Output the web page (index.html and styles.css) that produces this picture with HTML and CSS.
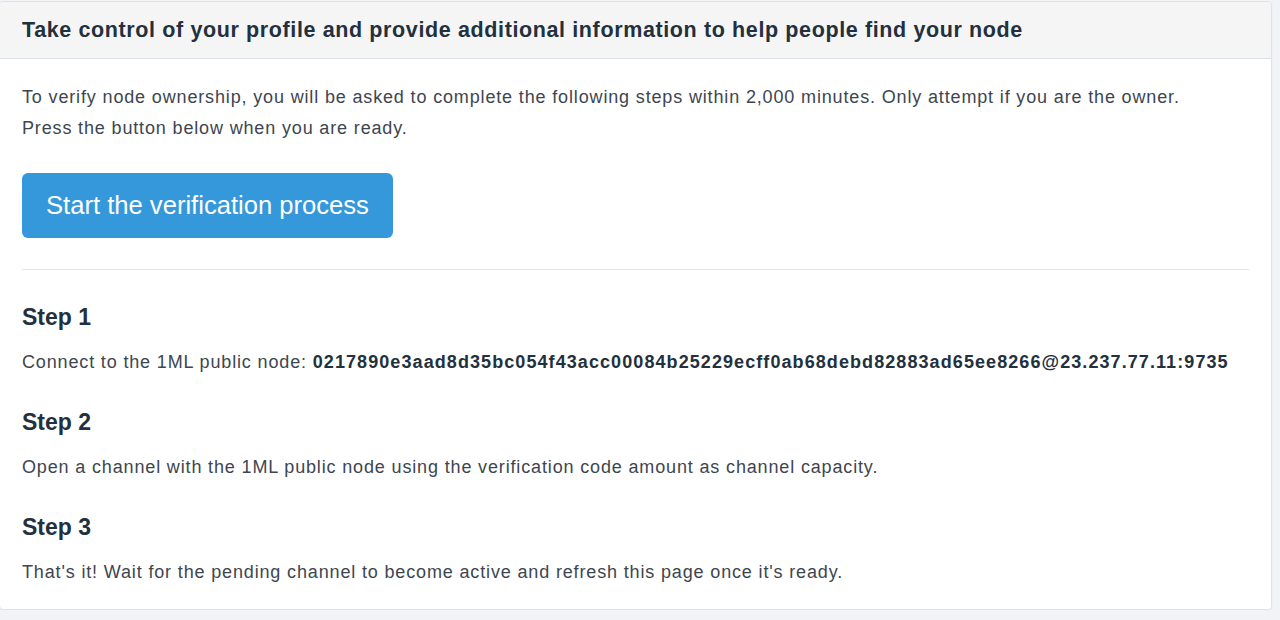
FILE: index.html
```html
<!DOCTYPE html>
<html>
<head>
<meta charset="utf-8">
<link rel="stylesheet" href="styles.css">
</head>
<body>
<div class="panel">
  <div class="panel-heading">Take control of your profile and provide additional information to help people find your node</div>
  <div class="panel-body">
    <p class="intro">To verify node ownership, you will be asked to complete the following steps within 2,000 minutes. Only attempt if you are the owner.<br>Press the button below when you are ready.</p>
    <button class="btn">Start the verification process</button>
    <hr class="divider">
    <h3 class="step">Step 1</h3>
    <p class="step-text">Connect to the 1ML public node: <strong>0217890e3aad8d35bc054f43acc00084b25229ecff0ab68debd82883ad65ee8266@23.237.77.11:9735</strong></p>
    <h3 class="step">Step 2</h3>
    <p class="step-text">Open a channel with the 1ML public node using the verification code amount as channel capacity.</p>
    <h3 class="step">Step 3</h3>
    <p class="step-text">That's it! Wait for the pending channel to become active and refresh this page once it's ready.</p>
  </div>
</div>
</body>
</html>
```
FILE: styles.css
```css
html, body {
  margin: 0;
  padding: 0;
  background: #f1f3f6;
  font-family: "Liberation Sans", Arial, sans-serif;
  color: #3d4650;
}
.panel {
  margin: 1px 0 0 -1px;
  width: 1273px;
  height: 609px;
  box-sizing: border-box;
  background: #fff;
  border: 1px solid #dfe3e8;
  border-radius: 4px;
  box-shadow: 0 1px 2px rgba(0,0,0,0.06);
  overflow: hidden;
}
.panel-heading {
  height: 57px;
  box-sizing: border-box;
  background: #f5f5f5;
  border-bottom: 1px solid #dde2e8;
  padding: 1px 22px 0 22px;
  display: flex;
  align-items: center;
  font-weight: bold;
  font-size: 21.5px;
  letter-spacing: 0.62px;
  color: #23303d;
}
.panel-body {
  padding: 23px 22px 0 22px;
}
.intro {
  margin: 0;
  font-size: 18px;
  letter-spacing: 0.85px;
  line-height: 31px;
}
.btn {
  margin-top: 29px;
  height: 65px;
  padding: 0 24px;
  border: none;
  border-radius: 6px;
  background: #3498db;
  color: #fff;
  font-family: "Liberation Sans", Arial, sans-serif;
  font-size: 25.6px;
}
.divider {
  margin: 31px 0 0 0;
  border: 0;
  border-top: 1px solid #e6e6e6;
}
.step {
  margin: 0;
  font-size: 23px;
  font-weight: bold;
  color: #23303d;
  line-height: 30px;
}
.divider + .step { margin-top: 32px; }
.step-text {
  margin: 15px 0 30px 0;
  font-size: 18px;
  letter-spacing: 0.85px;
  line-height: 30px;
}
.step-text strong {
  color: #23303d;
  letter-spacing: 1.08px;
}
```
